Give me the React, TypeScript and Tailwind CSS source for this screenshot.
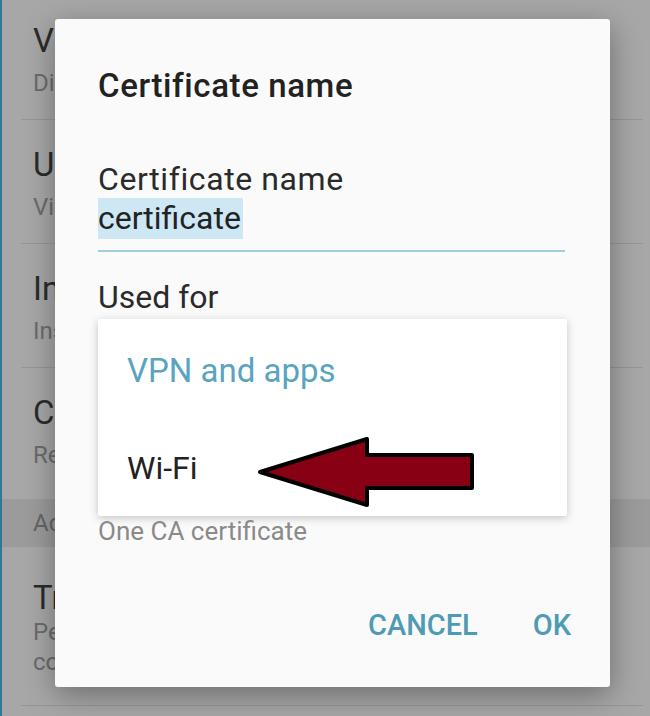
import React from 'react';

type Row = { title: string; sub: string; sub2?: string };

const rows: Row[] = [
  { title: 'View security certificates', sub: 'Display trusted CA certificates' },
  { title: 'User certificates', sub: 'View and modify stored certificates' },
  { title: 'Install from device storage', sub: 'Install certificates from storage' },
  { title: 'Clear credentials', sub: 'Remove all certificates' },
];

const SettingRow: React.FC<{ row: Row; divider?: boolean }> = ({ row, divider = true }) => (
  <div className="flex flex-col">
    <div className="pl-[31px] pt-[27px] h-[123px]">
      <div className="h-[36px] leading-[36px] text-[33px] text-[#2b2b2b] whitespace-nowrap">{row.title}</div>
      <div className="mt-[9px] h-[30px] leading-[30px] text-[24px] text-[#6b6b6b] whitespace-nowrap">{row.sub}</div>
    </div>
    {divider && <div className="ml-[19px] mr-[7px] h-px bg-[#969696]" />}
  </div>
);

const WarnArrow: React.FC = () => (
  <svg width="232" height="86" viewBox="0 0 232 86" className="absolute left-[250px] top-[430px]">
    <polygon
      points="8,42 115,9 115,25 220,25 220,58 115,58 115,75"
      fill="#870013"
      stroke="#000"
      strokeWidth="4"
      strokeLinejoin="round"
    />
  </svg>
);

const App: React.FC = () => {
  return (
    <div className="relative w-[650px] h-[716px] overflow-hidden bg-[#a7a7a7] font-['Roboto',sans-serif] border-l-2 border-[#2f7896]">
      {/* dimmed settings list behind the dialog */}
      <div className="flex flex-col -mt-[4px]">
        {rows.slice(0, 3).map((r) => (
          <SettingRow key={r.title} row={r} />
        ))}
        <div className="h-[131px]">
          <SettingRow row={rows[3]} divider={false} />
        </div>
        <div className="h-[48px] bg-[#9b9b9b] pl-[31px] flex items-center text-[24px] text-[#666]">
          Advanced
        </div>
        <div className="pl-[31px] pt-[32px] h-[158px]">
          <div className="h-[38px] leading-[38px] text-[33px] text-[#2b2b2b] whitespace-nowrap">Trust agents</div>
          <div className="h-[30px] leading-[30px] text-[24px] text-[#6b6b6b] whitespace-nowrap">Perform actions with trusted</div>
          <div className="h-[30px] leading-[30px] text-[24px] text-[#6b6b6b] whitespace-nowrap">connected devices</div>
        </div>
        <div className="ml-[19px] mr-[7px] h-px bg-[#969696]" />
      </div>

      {/* dialog */}
      <div className="absolute left-[53px] top-[19px] w-[555px] h-[668px] bg-[#fafafa] rounded-[3px] shadow-[0_8px_30px_rgba(0,0,0,0.35)] flex flex-col pl-[43px] pr-[43px] pt-[48px]">
        <div className="h-[38px] leading-[38px] text-[33px] tracking-[0.6px] font-medium text-[#222]">Certificate name</div>

        <div className="mt-[55px] h-[38px] leading-[38px] text-[32px] tracking-[0.6px] text-[#2a2a2a]">Certificate name</div>
        <div className="flex">
          <span className="h-[41px] leading-[41px] text-[32px] text-[#222] bg-[#cde8f4] pr-[2px]">certificate</span>
        </div>
        <div className="mt-[11px] h-[2px] bg-[#9fcfdd] mr-[2px]" />

        <div className="mt-[26px] h-[38px] leading-[38px] text-[32px] text-[#2a2a2a]">Used for</div>

        <div className="mt-[3px] h-[197px] bg-white rounded-[2px] shadow-[0_2px_8px_rgba(0,0,0,0.22)] flex flex-col pt-[3px] pl-[29px]">
          <div className="h-[98px] flex items-center text-[33px] text-[#5aa4bf]">VPN and apps</div>
          <div className="h-[98px] flex items-center text-[32px] text-[#222]">Wi-Fi</div>
        </div>

        <div className="h-[30px] leading-[30px] text-[26px] text-[#8a8a8a]">One CA certificate</div>

        <div className="mt-[60px] h-[40px] flex items-center justify-end gap-[55px] text-[29px] font-medium text-[#4f9bb6]">
          <span>CANCEL</span>
          <span className="-mr-[4px]">OK</span>
        </div>
      </div>

      <WarnArrow />
    </div>
  );
};

export default App;
